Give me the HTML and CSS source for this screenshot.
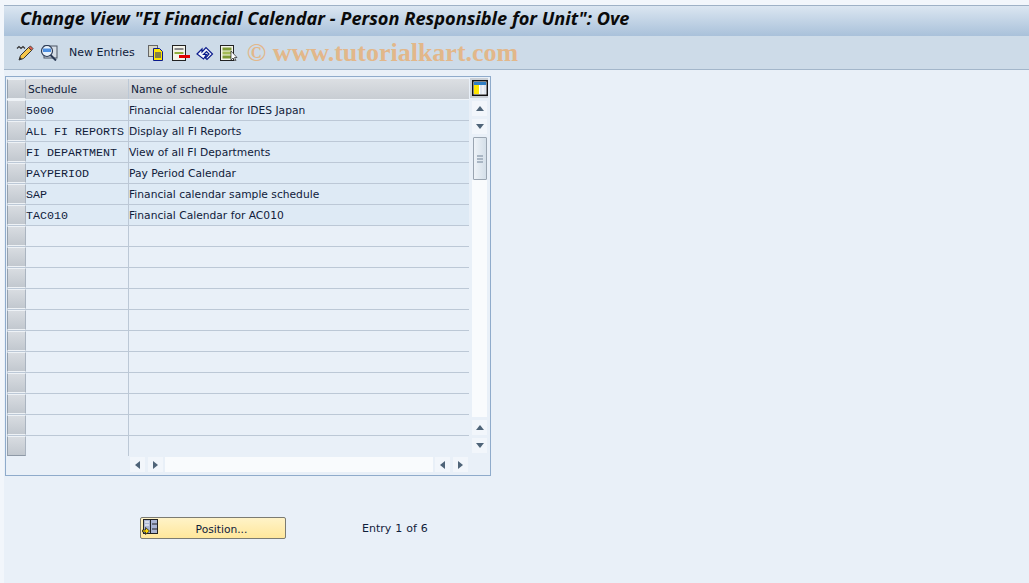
FILE: index.html
```html
<!DOCTYPE html>
<html lang="en">
<head>
<meta charset="utf-8">
<title>Change View</title>
<link rel="stylesheet" href="styles.css">
</head>
<body>
<div class="page">
  <header class="titlebar"><h1>Change View "FI Financial Calendar - Person Responsible for Unit": Ove</h1></header>
  <div class="toolbar">
    <svg class="icon first" viewBox="0 0 18 16"><path d="M1 3.500l2-2 2 2 2-2 2 2" fill="none" stroke="#333" stroke-width="1.200"/><path d="M3 15l1.500-4.500 8-8 3 3-8 8z" fill="#f6c64a" stroke="#333"/><path d="M12.500 2.500l3 3 1.500-2-2.500-2.500z" fill="#e0604f" stroke="#333" stroke-width=".8"/><path d="M3 15l1-3 2 2z" fill="#333"/></svg>
    <svg class="icon second" viewBox="0 0 18 16"><rect x="4" y="1" width="13" height="12" fill="#d5dde6" stroke="#4b5563"/><circle cx="7" cy="6" r="5.500" fill="#e8f1fa" stroke="#2b3a55" stroke-width="1.200"/><path d="M3 3.500h8v3.500H3z" fill="#4d8fe0"/><path d="M10.500 10l5.500 5.500" stroke="#2b3a55" stroke-width="2"/></svg>
    <span class="newentries">New Entries</span>
    <svg class="icon copy" viewBox="0 0 16 16"><rect x=".5" y=".5" width="9" height="11" fill="#d8d8c8" stroke="#666"/><path d="M5.500 3.500h6l3 3v9h-9z" fill="#ffe600" stroke="#0a1a8c"/><path d="M7 8h6M7 10h6M7 12h6" stroke="#0a1a8c"/></svg>
    <svg class="icon del" viewBox="0 0 18 16"><rect x=".5" y=".5" width="13" height="15" fill="#f4f4ea" stroke="#222"/><path d="M2.500 3h9v2h-9z" fill="#8a8a8a"/><path d="M2.500 7h9v2h-9z" fill="#8fae3e"/><rect x="7" y="10" width="11" height="3" fill="#e00000"/></svg>
    <svg class="icon undo" viewBox="0 0 18 16"><path d="M1 9l5-5v3l4-4.500 6.500 6.500-5.500 5.500-1.500-1.500 3.500-4-2.500-2.500-3 3h3l-3 4.500z" fill="#f5f7fb" stroke="#0a1a8c" stroke-width="1.200"/></svg>
    <svg class="icon sel-all" viewBox="0 0 18 16"><rect x=".5" y=".5" width="13" height="15" fill="#f4f4ea" stroke="#222"/><path d="M2.500 2.500h9v3h-9z" fill="#7f9a35"/><path d="M2.500 6.500h9v3h-9z" fill="#a4bb55"/><path d="M2.500 10.500h9v3h-9z" fill="#7f9a35"/><path d="M11 6v9l2-2 2 3 1-.5-1.500-3H17z" fill="#fff" stroke="#222" stroke-width=".7"/></svg>
    <span class="watermark">© www.tutorialkart.com</span>
  </div>
  <main class="content">
    <section class="panel">
      <div class="grid">
        <div class="table">
          <div class="row head"><span class="sel"></span><span class="c1">Schedule</span><span class="c2">Name of schedule</span></div>
          <div class="row filled"><span class="sel"></span><span class="c1 mono">5000</span><span class="c2">Financial calendar for IDES Japan</span></div>
          <div class="row filled"><span class="sel"></span><span class="c1 mono">ALL FI REPORTS</span><span class="c2">Display all FI Reports</span></div>
          <div class="row filled"><span class="sel"></span><span class="c1 mono">FI DEPARTMENT</span><span class="c2">View of all FI Departments</span></div>
          <div class="row filled"><span class="sel"></span><span class="c1 mono">PAYPERIOD</span><span class="c2">Pay Period Calendar</span></div>
          <div class="row filled"><span class="sel"></span><span class="c1 mono">SAP</span><span class="c2">Financial calendar sample schedule</span></div>
          <div class="row filled"><span class="sel"></span><span class="c1 mono">TAC010</span><span class="c2">Financial Calendar for AC010</span></div>
          <div class="row"><span class="sel"></span><span class="c1"></span><span class="c2"></span></div>
          <div class="row"><span class="sel"></span><span class="c1"></span><span class="c2"></span></div>
          <div class="row"><span class="sel"></span><span class="c1"></span><span class="c2"></span></div>
          <div class="row"><span class="sel"></span><span class="c1"></span><span class="c2"></span></div>
          <div class="row"><span class="sel"></span><span class="c1"></span><span class="c2"></span></div>
          <div class="row"><span class="sel"></span><span class="c1"></span><span class="c2"></span></div>
          <div class="row"><span class="sel"></span><span class="c1"></span><span class="c2"></span></div>
          <div class="row"><span class="sel"></span><span class="c1"></span><span class="c2"></span></div>
          <div class="row"><span class="sel"></span><span class="c1"></span><span class="c2"></span></div>
          <div class="row"><span class="sel"></span><span class="c1"></span><span class="c2"></span></div>
          <div class="row last"><span class="sel"></span><span class="c1"></span><span class="c2"></span></div>
        </div>
        <div class="vside">
          <div class="config"><svg viewBox="0 0 16 16"><rect x=".75" y=".75" width="14.500" height="14.500" fill="#fff" stroke="#111" stroke-width="1.500"/><rect x="2" y="2" width="5" height="12" fill="#ffe600"/><rect x="8" y="2" width="2.500" height="12" fill="#dfe6ee"/><rect x="11.500" y="2" width="2.500" height="12" fill="#dfe6ee"/><rect x="2" y="2" width="12" height="3" fill="#2f7fc4"/></svg></div>
          <div class="vscroll">
            <span class="sbtn"><i class="tri up"></i></span>
            <span class="sbtn"><i class="tri down"></i></span>
            <span class="thumb"><i class="grip"></i></span>
            <span class="track"></span>
            <span class="sbtn"><i class="tri up"></i></span>
            <span class="sbtn"><i class="tri down"></i></span>
          </div>
        </div>
      </div>
      <div class="hscroll">
        <span class="hbtn"><i class="tri left"></i></span>
        <span class="hbtn"><i class="tri right"></i></span>
        <span class="htrack"></span>
        <span class="hbtn"><i class="tri left"></i></span>
        <span class="hbtn"><i class="tri right"></i></span>
      </div>
    </section>
    <div class="actions">
      <button class="position" type="button">
        <svg viewBox="0 0 16 16"><rect x="1.500" y=".5" width="14" height="14" fill="#a9b4d2" stroke="#222"/><path d="M8.500 1v13" stroke="#222"/><path d="M10 5h5M10 10h5" stroke="#222"/><path d="M3 3h4M3 6h4" stroke="#fff"/><path d="M.5 11h3V8.500l4 3.500-4 3.500V13h-3z" fill="#ffd800" stroke="#222" stroke-width=".8"/></svg>
        <span>Position...</span>
      </button>
      <span class="entry">Entry 1 of 6</span>
    </div>
  </main>
</div>
</body>
</html>
```
FILE: styles.css
```css
* { box-sizing: border-box; }
html, body { margin: 0; height: 100%; }
body {
  background: #f2f6fb;
  font-family: "DejaVu Sans", "Liberation Sans", sans-serif;
  font-size: 10.7px;
  color: #10203a;
  overflow: hidden;
}
.page {
  width: 1029px;
  height: 583px;
  padding: 5px 0 0 4px;
  display: flex;
  flex-direction: column;
}
.titlebar {
  height: 31px;
  flex: none;
  display: flex;
  align-items: center;
  padding: 0 0 6px 16px;
  background: linear-gradient(#dbe6f1, #a9c1da);
  border-top: 1px solid #9eb1c6;
  white-space: nowrap;
  overflow: hidden;
}
.titlebar h1 {
  margin: 0;
  font-family: "Noto Sans", sans-serif;
  font-size: 18.2px;
  font-weight: bold;
  font-style: italic;
  color: #0a0a0a;
}
.toolbar {
  height: 34px;
  flex: none;
  display: flex;
  align-items: center;
  background: #cddbe8;
  border-bottom: 1px solid #a3b6ca;
  padding-left: 12px;
}
.icon { width: 18px; height: 16px; flex: none; margin-right: 6px; }
.icon.second { margin-right: 0; }
.icon.copy { margin-right: 8px; width: 16px; }
.newentries { margin: 0 13px 0 11px; font-size: 11px; }
.watermark {
  margin-left: 3px;
  font-family: "Liberation Serif", serif;
  font-size: 26px;
  font-weight: bold;
  color: #e2b78a;
  white-space: nowrap;
}
.content {
  flex: 1;
  background: #e9f0f8;
  padding: 6px 0 0 1px;
}
.panel {
  width: 486px;
  height: 400px;
  border: 1px solid #8fabcb;
  padding: 2px 0 0 1px;
  display: flex;
  flex-direction: column;
}
.grid { display: flex; height: 377px; }
.table { width: 462px; flex: none; }
.row {
  display: flex;
  height: 21px;
  border-bottom: 1px solid #bcc8d6;
  line-height: 22px;
  white-space: nowrap;
}
.row.head {
  background: linear-gradient(#dcdfe3, #c8cdd3);
  border-bottom: 1px solid #eef3f8;
}
.row.filled { background: #deeaf5; }
.row.last { border-bottom: 0; height: 20px; }
.sel {
  width: 19px;
  flex: none;
  background: linear-gradient(#d8dce1, #c2c8cf);
  border: 1px solid #eef2f6;
  border-left: 1px solid #95a1ae;
  border-right: 1px solid #aab4c0;
}
.row.last .sel { border-bottom: 1px solid #8e99a6; }
.c1 {
  width: 103px;
  flex: none;
  border-right: 1px solid #bcc8d6;
}
.head .c1 { padding-left: 2px; }
.mono { font-family: "Liberation Mono", monospace; font-size: 11.67px; }
.c2 { flex: 1; }
.head .c2 { padding-left: 2px; }
.vside { flex: none; width: 21px; display: flex; flex-direction: column; align-items: flex-end; }
.config {
  width: 18px;
  height: 20px;
  flex: none;
  margin: -1px 2px 3px 0;
  display: flex;
  align-items: flex-start;
  justify-content: flex-end;
  padding-top: 2px;
  background: #c9ced4;
}
.config svg { width: 16px; height: 16px; }
.vscroll { width: 15px; margin-right: 3px; flex: 1; display: flex; flex-direction: column; }
.sbtn {
  height: 15px;
  margin-bottom: 3px;
  flex: none;
  background: #f2f6fb;
  display: flex;
  align-items: center;
  justify-content: center;
}
.thumb {
  height: 43px;
  flex: none;
  background: linear-gradient(90deg, #eef3f8, #d4dfe9);
  border: 1px solid #9aa5b1;
  border-radius: 1px;
  margin-left: 1px;
  display: flex;
  align-items: center;
  justify-content: center;
}
.grip {
  width: 6px;
  height: 8px;
  background: repeating-linear-gradient(#a9b6c4 0 2px, transparent 2px 3px);
}
.track { flex: 1; background: #f9fbfd; margin-bottom: 3px; }
.tri { display: block; width: 0; height: 0; border-style: solid; border-color: transparent; }
.tri.up { border-width: 0 4.500px 5px; border-bottom-color: #4f6478; }
.tri.down { border-width: 5px 4.500px 0; border-top-color: #4f6478; }
.tri.left { border-width: 4.500px 5px 4.500px 0; border-right-color: #4f6478; }
.tri.right { border-width: 4.500px 0 4.500px 5px; border-left-color: #4f6478; }
.hscroll {
  display: flex;
  height: 15px;
  margin-top: 1px;
  margin-left: 123px;
  width: 341px;
}
.hbtn {
  width: 15px;
  flex: none;
  margin-right: 3px;
  background: #f2f6fb;
  display: flex;
  align-items: center;
  justify-content: center;
}
.htrack { flex: 1; background: #f9fbfd; margin: 0 2px 0 -1px; }
.actions {
  display: flex;
  align-items: center;
  margin: 40px 0 0 135px;
  height: 23px;
}
.position {
  width: 146px;
  height: 22px;
  padding: 0 0 0 1px;
  background: linear-gradient(#fff3c8, #ffe79b);
  border: 1px solid #7b7b72;
  border-radius: 2px;
  display: flex;
  align-items: center;
  font: inherit;
  color: #10203a;
}
.position svg { width: 16px; height: 16px; flex: none; margin-top: -2px; }
.position span { flex: 1; text-align: center; padding-top: 3px; }
.entry { margin-left: 76px; font-size: 11px; word-spacing: 0.5px; padding-top: 2px; }
```
